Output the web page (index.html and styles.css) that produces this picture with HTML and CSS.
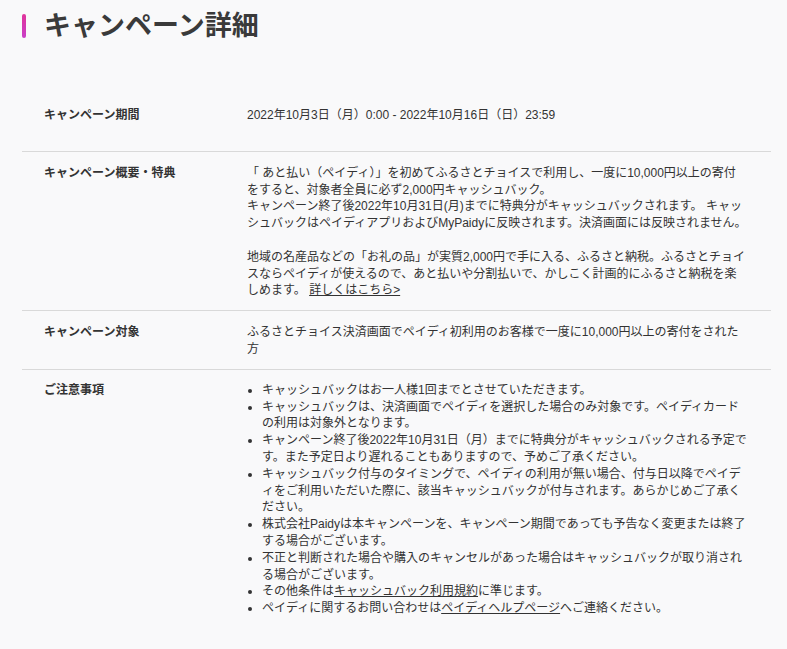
FILE: index.html
```html
<!DOCTYPE html>
<html lang="ja">
<head>
  <meta charset="UTF-8" />
  <meta name="viewport" content="width=device-width, initial-scale=1.0">
  <title>キャンペーン詳細</title>
  <link rel="stylesheet" href="styles.css">
</head>
<body>
  <div class="page">
    <h1 class="title"><span class="title-bar"></span>キャンペーン詳細</h1>

    <div class="details">
      <div class="row first">
        <div class="label">キャンペーン期間</div>
        <div class="value">2022年10月3日（月）0:00 - 2022年10月16日（日）23:59</div>
      </div>

      <div class="row">
        <div class="label">キャンペーン概要・特典</div>
        <div class="value">
          「 あと払い（ペイディ）」を初めてふるさとチョイスで利用し、一度に10,000円以上の寄付をすると、対象者全員に必ず2,000円キャッシュバック。<br>
          キャンペーン終了後2022年10月31日(月)までに特典分がキャッシュバックされます。 キャッシュバックはペイディアプリおよびMyPaidyに反映されます。決済画面には反映されません。<br><br>
          地域の名産品などの「お礼の品」が実質2,000円で手に入る、ふるさと納税。ふるさとチョイスならペイディが使えるので、あと払いや分割払いで、かしこく計画的にふるさと納税を楽しめます。 <a href="#" class="link">詳しくはこちら&gt;</a>
        </div>
      </div>

      <div class="row">
        <div class="label">キャンペーン対象</div>
        <div class="value">ふるさとチョイス決済画面でペイディ初利用のお客様で一度に10,000円以上の寄付をされた方</div>
      </div>

      <div class="row last">
        <div class="label">ご注意事項</div>
        <div class="value">
          <ul class="notes">
            <li>キャッシュバックはお一人様1回までとさせていただきます。</li>
            <li>キャッシュバックは、決済画面でペイディを選択した場合のみ対象です。ペイディカードの利用は対象外となります。</li>
            <li>キャンペーン終了後2022年10月31日（月）までに特典分がキャッシュバックされる予定です。また予定日より遅れることもありますので、予めご了承ください。</li>
            <li>キャッシュバック付与のタイミングで、ペイディの利用が無い場合、付与日以降でペイディをご利用いただいた際に、該当キャッシュバックが付与されます。あらかじめご了承ください。</li>
            <li>株式会社Paidyは本キャンペーンを、キャンペーン期間であっても予告なく変更または終了する場合がございます。</li>
            <li>不正と判断された場合や購入のキャンセルがあった場合はキャッシュバックが取り消される場合がございます。</li>
            <li>その他条件は<a href="#" class="link">キャッシュバック利用規約</a>に準じます。</li>
            <li>ペイディに関するお問い合わせは<a href="#" class="link">ペイディヘルプページ</a>へご連絡ください。</li>
          </ul>
        </div>
      </div>
    </div>
  </div>
</body>
</html>
```

FILE: styles.css
```css
html, body {
  margin: 0;
  padding: 0;
  font-family: "Liberation Sans", "Noto Sans CJK JP", sans-serif;
}
body {
  background-color: #f9f9fa;
  color: #333;
}
.page {
  padding: 12px 16px 30px 22px;
}
.title {
  display: flex;
  align-items: center;
  gap: 18px;
  margin: 0;
  font-size: 27px;
  line-height: 28px;
  font-weight: bold;
  color: #3a3a3a;
}
.title-bar {
  width: 4px;
  height: 24px;
  border-radius: 2px;
  background: linear-gradient(#e0349a, #c93fc8);
}
.details {
  margin-top: 67px;
  font-size: 12px;
  line-height: 1.4;
}
.row {
  display: flex;
  padding: 13px 0 11px;
  border-bottom: 1px solid #d9d9d9;
}
.row.first {
  padding: 0 0 27px;
}
.row.last {
  border-bottom: none;
  padding-top: 12px;
}
.label {
  width: 203px;
  padding-left: 22px;
  font-weight: bold;
  flex-shrink: 0;
}
.value {
  width: 500px;
}
.link {
  color: #333;
  text-decoration: underline;
}
.notes {
  margin: 0;
  padding-left: 15px;
}
```
